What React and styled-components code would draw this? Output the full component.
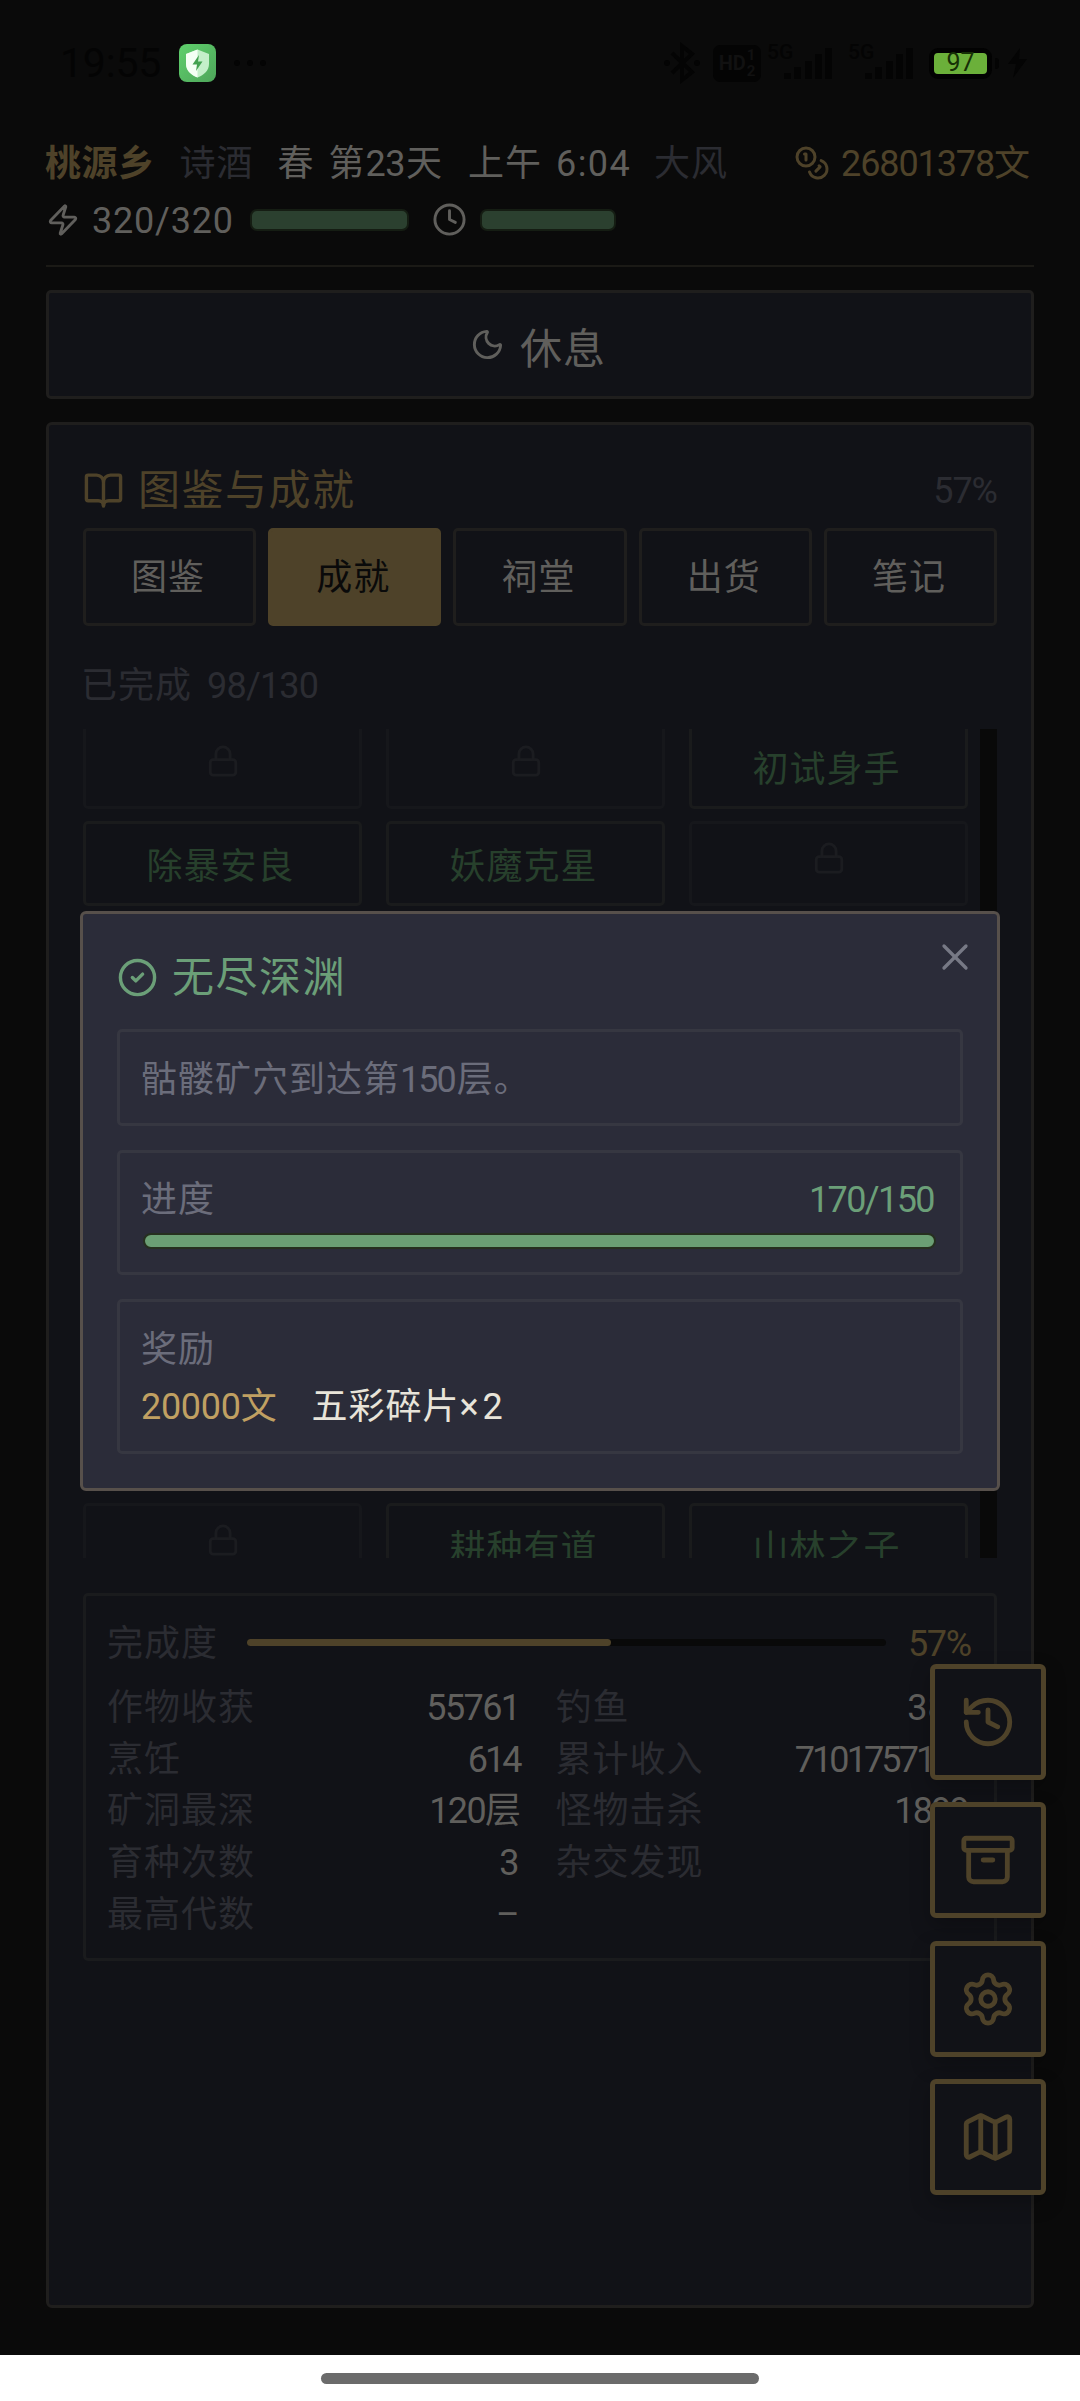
import React, { useState } from 'react';
import styled, { createGlobalStyle } from 'styled-components';
import {
  Zap,
  Clock,
  Coins,
  Moon,
  BookOpen,
  Lock,
  X,
  CircleCheck,
  History,
  Archive,
  Settings,
  Map as MapIcon,
} from 'lucide-react';

const GlobalStyle = createGlobalStyle`
  * {
    box-sizing: border-box;
  }

  body {
    margin: 0;
    background: #0a0a0a;
    font-family: Roboto, "Noto Sans CJK SC", sans-serif;
    font-size: 36px;
    line-height: 1;
  }
`;

const colors = {
  text: '#605f5c',
  muted: '#2b2c32',
  accent: '#4e4229',
  success: '#27402c',
  border: '#1f1e1d',
  panel: '#111217',
};

const Page = styled.div`
  display: flex;
  flex-direction: column;
  width: 1080px;
  height: 2401px;
  overflow: hidden;
`;

const StatusBar = styled.div`
  display: flex;
  align-items: center;
  height: 126px;
  padding: 0 53px 0 60px;
  color: #040404;
`;

const StatusTime = styled.span`
  width: 119px;
  font-size: 41px;
  letter-spacing: -0.2px;
`;

const StatusDots = styled.span`
  display: flex;
  gap: 7px;
  margin-left: 18px;

  i {
    width: 6px;
    height: 6px;
    border-radius: 50%;
    background: #040404;
  }
`;

const StatusRight = styled.div`
  display: flex;
  align-items: center;
  margin-left: auto;
`;

const HdBadge = styled.div`
  display: flex;
  align-items: center;
  justify-content: center;
  gap: 1px;
  width: 48px;
  height: 37px;
  margin: 0 6px 0 13px;
  border-radius: 7px;
  background: #040404;
  color: #111111;
  font-size: 20px;
  font-weight: 700;

  small {
    display: flex;
    flex-direction: column;
    font-size: 15px;
    line-height: 16px;
  }
`;

const Signal = styled.div`
  display: flex;
  width: 65px;
  height: 38px;
  margin-right: ${props => props.$gap || 0}px;
`;

const SignalLabel = styled.span`
  width: 17px;
  font-size: 21px;
  line-height: 17px;
  font-weight: 500;
  white-space: nowrap;
`;

const SignalBars = styled.svg`
  width: 48px;
  height: 38px;
  fill: #040404;
`;

const Battery = styled.div`
  display: flex;
  align-items: center;
  justify-content: center;
  width: 63px;
  height: 31px;
  margin-left: 16px;
  border: 5px solid #020202;
  border-radius: 9px;
  background: #6bb03a;
  color: #163006;
  font-size: 25px;
  line-height: 20px;
`;

const BatteryNub = styled.div`
  width: 4px;
  height: 11px;
  margin: 0 9px 0 3px;
  border-radius: 0 3px 3px 0;
  background: #040404;
`;

const Main = styled.main`
  padding: 0 46px;
  height: 2229px;
`;

const Header = styled.header`
  height: 141px;
  border-bottom: 2px solid #1b1a16;
`;

const InfoRow = styled.div`
  display: flex;
  align-items: center;
  height: ${props => props.$height}px;
  white-space: nowrap;
`;

const Text = styled.span`
  color: ${props => props.$color || colors.text};
  font-size: ${props => props.$size || 36}px;
  letter-spacing: ${props => props.$spacing ?? 1}px;
  margin-left: ${props => props.$left || 0}px;
  padding-top: 2px;
  font-weight: ${props => (props.$bold ? 700 : 400)};
  white-space: pre;
`;

const Money = styled.div`
  display: flex;
  align-items: center;
  gap: 11px;
  margin-left: auto;
  margin-right: 5px;
  color: ${colors.accent};
`;

const Meter = styled.div`
  width: ${props => props.$width}px;
  height: 22px;
  margin-left: ${props => props.$left}px;
  border: 2px solid #151d13;
  border-radius: 7px;
  background: #2b402f;
`;

const RestButton = styled.button`
  display: flex;
  align-items: center;
  justify-content: center;
  gap: 15px;
  width: 100%;
  height: 109px;
  margin: 23px 0;
  padding: 0 4px 0 0;
  border: 3px solid ${colors.border};
  border-radius: 5px;
  background: ${colors.panel};
  color: ${colors.text};
  font-family: inherit;
`;

const Panel = styled.section`
  height: 1886px;
  padding: 27px 34px 0;
  border: 3px solid ${colors.border};
  border-radius: 6px;
  background: ${colors.panel};
`;

const PanelTitle = styled.div`
  display: flex;
  align-items: center;
  gap: 14px;
  height: 76px;
  color: ${colors.accent};

  > :last-child {
    margin-left: auto;
  }
`;

const Tabs = styled.div`
  display: grid;
  grid-template-columns: repeat(5, 1fr);
  gap: 12px;
`;

const Tab = styled.button`
  display: flex;
  align-items: center;
  justify-content: center;
  height: 98px;
  padding: 2px 3px 0 0;
  border: 3px solid ${props => (props.$active ? colors.accent : colors.border)};
  border-radius: 5px;
  background: ${props => (props.$active ? colors.accent : 'transparent')};
  color: ${props => (props.$active ? '#0a0a0a' : colors.text)};
  font-family: inherit;
  font-size: 36px;
  line-height: 36px;
  letter-spacing: 1px;
`;

const DoneCount = styled.div`
  display: flex;
  align-items: center;
  height: 103px;
  padding-top: 15px;
  margin-left: -2px;
`;

const ScrollArea = styled.div`
  display: flex;
  justify-content: space-between;
  height: 829px;
  overflow: hidden;
`;

const Grid = styled.div`
  display: grid;
  grid-template-columns: repeat(3, 279px);
  grid-auto-rows: 85px;
  column-gap: 24px;
  row-gap: 12.4px;
  margin-top: -5px;
`;

const ScrollTrack = styled.div`
  width: 17px;
  background: #090909;
`;

const Cell = styled.div`
  display: flex;
  align-items: center;
  justify-content: center;
  padding: ${props => (props.$locked ? '0 0 11px' : '4px 4px 0 0')};
  border: 3px solid ${props => (props.$locked ? '#16171b' : '#1a1b1c')};
  border-radius: 5px;
  color: ${props => (props.$locked ? '#1b1c20' : colors.success)};
`;

const Stats = styled.div`
  height: 368px;
  margin-top: 35px;
  padding: 10px 22px 0 21px;
  border: 3px solid #1a1b1d;
  border-radius: 5px;
`;

const Completion = styled.div`
  display: flex;
  align-items: center;
  height: 73px;
  margin-bottom: 2px;
`;

const CompletionTrack = styled.div`
  width: 639px;
  height: 7px;
  margin-left: 29px;
  border-radius: 4px;
  background: #090909;
`;

const CompletionFill = styled.div`
  height: 100%;
  border-radius: 4px;
  background: ${colors.accent};
`;

const StatGrid = styled.div`
  display: grid;
  grid-template-columns: 1fr 1fr;
  grid-auto-rows: 51.7px;
  column-gap: 32px;
`;

const StatItem = styled.div`
  display: flex;
  align-items: center;
  justify-content: space-between;
  padding-right: 4px;
`;

const FloatingMenu = styled.nav`
  position: absolute;
  top: 1664px;
  left: 930px;
  display: flex;
  flex-direction: column;
  gap: 22.3px;
`;

const FloatingButton = styled.button`
  display: flex;
  align-items: center;
  justify-content: center;
  width: 115.5px;
  height: 116px;
  padding: 0;
  border: 5px solid ${colors.accent};
  border-radius: 6px;
  background: ${colors.panel};
  box-shadow: 0 8px 20px rgba(0, 0, 0, 0.25);
  color: ${colors.accent};
`;

const Modal = styled.div`
  position: absolute;
  top: 911px;
  left: 80px;
  width: 920px;
  height: 580px;
  padding: 30px 34px 0;
  border: 3px solid #57504b;
  border-radius: 6px;
  background: #2b2c39;
`;

const CloseButton = styled.button`
  position: absolute;
  top: 21px;
  right: 20px;
  width: 44px;
  height: 44px;
  padding: 0;
  border: 0;
  background: none;
  color: #777985;
`;

const ModalTitle = styled.div`
  display: flex;
  align-items: center;
  gap: 14px;
  height: 66px;
  margin-bottom: 19px;
  color: #6b9f78;
`;

const ModalBox = styled.div`
  display: flex;
  flex-direction: column;
  height: ${props => props.$height}px;
  margin-bottom: 24px;
  padding: ${props => props.$top}px 26px 0 21px;
  border: 3px solid #363741;
  border-radius: 5px;
`;

const ModalRow = styled.div`
  display: flex;
  align-items: center;
  justify-content: ${props => (props.$spread ? 'space-between' : 'flex-start')};
  height: ${props => props.$height || 50}px;
`;

const ProgressBar = styled.div`
  height: 16px;
  margin: 9px -2px 0 2px;
  border: 2px solid #26301f;
  border-radius: 8px;
  background: #6b9f74;
`;

const GestureArea = styled.div`
  display: flex;
  justify-content: center;
  height: 46px;
  padding-top: 18px;
  background: #ffffff;
`;

const GestureHandle = styled.div`
  width: 438px;
  height: 11px;
  border-radius: 6px;
  background: #6b6b6b;
`;

const tabs = ['图鉴', '成就', '祠堂', '出货', '笔记'];

// null is an achievement that is still locked
const achievements = [
  null, null, '初试身手',
  '除暴安良', '妖魔克星', null,
  null, null, null,
  null, null, null,
  null, null, null,
  null, null, null,
  null, null, null,
  null, null, null,
  null, '耕种有道', '山林之子',
];

const stats = [
  { label: '作物收获', value: '55761', spacing: -1.6 },
  { label: '钓鱼', value: '389', spacing: 0 },
  { label: '烹饪', value: '614', spacing: -3 },
  { label: '累计收入', value: '7101757108', spacing: -2.9 },
  { label: '矿洞最深', value: '120层', spacing: -1.6 },
  { label: '怪物击杀', value: '1899', spacing: -1.8 },
  { label: '育种次数', value: '3', spacing: 0 },
  { label: '杂交发现', value: '57', spacing: 0 },
  { label: '最高代数', value: '–', spacing: 0 },
];

const AppBadge = () => (
  <svg width="37" height="38" viewBox="0 0 37 38">
    <defs>
      <linearGradient id="badge" x1="0" y1="0" x2="1" y2="1">
        <stop offset="0" stopColor="#5fd06c" />
        <stop offset="1" stopColor="#4ea55a" />
      </linearGradient>
    </defs>
    <rect width="37" height="38" rx="8" fill="url(#badge)" />
    <path d="M18.500 5.500L30 10V20C30 26.500 25 31 18.500 33.500C12 31 7 26.500 7 20V10Z" fill="#c4efc9" />
    <path d="M18.500 5.500V33.500C12 31 7 26.500 7 20V10Z" fill="#f4fff4" />
    <path d="M20 11L13.500 20.500H18L17 27L23.500 17.500H19Z" fill="#43a250" />
  </svg>
);

const BluetoothIcon = () => (
  <svg width="36" height="42" viewBox="0 0 36 42" fill="none" stroke="#040404" strokeWidth="4">
    <path d="M8 11L28 30L18 38V4L28 12L8 31" />
    <circle cx="3" cy="21" r="3" fill="#040404" stroke="none" />
    <circle cx="33" cy="21" r="3" fill="#040404" stroke="none" />
  </svg>
);

const SignalIcon = ({ gap }) => (
  <Signal $gap={gap}>
    <SignalLabel>5G</SignalLabel>
    <SignalBars viewBox="0 0 48 38">
      <rect x="0" y="29" width="7" height="6" />
      <rect x="10" y="23" width="7" height="12" />
      <rect x="21" y="17" width="7" height="18" />
      <rect x="31" y="10" width="7" height="25" />
      <rect x="41" y="4" width="7" height="31" />
    </SignalBars>
  </Signal>
);

const ChargeIcon = () => (
  <svg width="19" height="30" viewBox="0 0 19 30" fill="#040404">
    <path d="M12 0L0 16H8L5 30L19 11H11Z" />
  </svg>
);

const App = () => {
  const [activeTab, setActiveTab] = useState('成就');
  const [modalOpen, setModalOpen] = useState(true);

  return (
    <>
      <GlobalStyle />
      <Page>
        <StatusBar>
          <StatusTime>19:55</StatusTime>
          <AppBadge />
          <StatusDots><i /><i /><i /></StatusDots>
          <StatusRight>
            <BluetoothIcon />
            <HdBadge>HD<small><span>1</span><span>2</span></small></HdBadge>
            <SignalIcon gap={16} />
            <SignalIcon />
            <Battery>97</Battery>
            <BatteryNub />
            <ChargeIcon />
          </StatusRight>
        </StatusBar>

        <Main>
          <Header>
            <InfoRow $height={73}>
              <Text $bold $color={colors.accent} $left={-1} $spacing={0.5}>桃源乡</Text>
              <Text $color={colors.muted} $left={25}>诗酒</Text>
              <Text $left={24}>春</Text>
              <Text $left={14}>第</Text>
              <Text $spacing={-0.5}>23</Text>
              <Text $left={1}>天</Text>
              <Text $left={25}>上午</Text>
              <Text $left={14} $spacing={1.4}>6:04</Text>
              <Text $color={colors.muted} $left={23}>大风</Text>
              <Money>
                <Coins size={36} strokeWidth={2} />
                <Text $color={colors.accent} $spacing={-1.1}>26801378文</Text>
              </Money>
            </InfoRow>
            <InfoRow $height={41}>
              <Zap size={34} strokeWidth={2} color={colors.text} />
              <Text $left={12} $spacing={0.8}>320/320</Text>
              <Meter $width={159} $left={16} />
              <Clock size={35} strokeWidth={2} color={colors.text} style={{ marginLeft: 23 }} />
              <Meter $width={136} $left={13} />
            </InfoRow>
          </Header>

          <RestButton>
            <Moon size={35} strokeWidth={2} />
            <Text $size={42}>休息</Text>
          </RestButton>

          <Panel>
            <PanelTitle>
              <BookOpen size={41} strokeWidth={2} />
              <Text $size={42} $spacing={1.5} $color={colors.accent}>图鉴与成就</Text>
              <Text $color={colors.muted} $spacing={-1}>57%</Text>
            </PanelTitle>
            <Tabs>
              {tabs.map(tab => (
                <Tab key={tab} $active={tab === activeTab} onClick={() => setActiveTab(tab)}>
                  {tab}
                </Tab>
              ))}
            </Tabs>
            <DoneCount>
              <Text $color={colors.muted}>已完成</Text>
              <Text $color={colors.muted} $left={15} $spacing={-0.8}>98/130</Text>
            </DoneCount>

            <ScrollArea>
              <Grid>
                {achievements.map((name, i) => (
                  <Cell key={i} $locked={!name}>
                    {name
                      ? <Text $color={colors.success}>{name}</Text>
                      : <Lock size={34} strokeWidth={2} />}
                  </Cell>
                ))}
              </Grid>
              <ScrollTrack />
            </ScrollArea>

            <Stats>
              <Completion>
                <Text $color={colors.muted}>完成度</Text>
                <CompletionTrack>
                  <CompletionFill style={{ width: '57%' }} />
                </CompletionTrack>
                <Text $color={colors.accent} $left={22} $spacing={-1.4}>57%</Text>
              </Completion>
              <StatGrid>
                {stats.map(stat => (
                  <StatItem key={stat.label}>
                    <Text $color={colors.muted}>{stat.label}</Text>
                    <Text $spacing={stat.spacing}>{stat.value}</Text>
                  </StatItem>
                ))}
              </StatGrid>
            </Stats>
          </Panel>
        </Main>

        <GestureArea>
          <GestureHandle />
        </GestureArea>
      </Page>

      <FloatingMenu>
        <FloatingButton><History size={58} strokeWidth={2} /></FloatingButton>
        <FloatingButton><Archive size={58} strokeWidth={2} /></FloatingButton>
        <FloatingButton><Settings size={58} strokeWidth={2} /></FloatingButton>
        <FloatingButton><MapIcon size={58} strokeWidth={2} /></FloatingButton>
      </FloatingMenu>

      {modalOpen && (
        <Modal>
          <CloseButton onClick={() => setModalOpen(false)}>
            <X size={44} strokeWidth={1.8} />
          </CloseButton>
          <ModalTitle>
            <CircleCheck size={41} strokeWidth={2} />
            <Text $size={42} $spacing={1.5} $color="#6b9f78">无尽深渊</Text>
          </ModalTitle>
          <ModalBox $height={97} $top={22}>
            <ModalRow>
              <Text $color="#6b6d7b">骷髅矿穴到达第</Text>
              <Text $color="#6b6d7b" $spacing={-2}>150</Text>
              <Text $color="#6b6d7b" $left={2}>层。</Text>
            </ModalRow>
          </ModalBox>
          <ModalBox $height={125} $top={21}>
            <ModalRow $spread>
              <Text $color="#6b6d7b">进度</Text>
              <Text $color="#6b9f78" $spacing={-1.6}>170/150</Text>
            </ModalRow>
            <ProgressBar />
          </ModalBox>
          <ModalBox $height={155} $top={19}>
            <ModalRow $height={56}>
              <Text $color="#6b6d7b">奖励</Text>
            </ModalRow>
            <ModalRow $height={58}>
              <Text $color="#c0a062" $spacing={-0.3}>20000文</Text>
              <Text $color="#e8e4d9" $left={35}>五彩碎片</Text>
              <Text $color="#e8e4d9" $spacing={4}>×2</Text>
            </ModalRow>
          </ModalBox>
        </Modal>
      )}
    </>
  );
};

export default App;
